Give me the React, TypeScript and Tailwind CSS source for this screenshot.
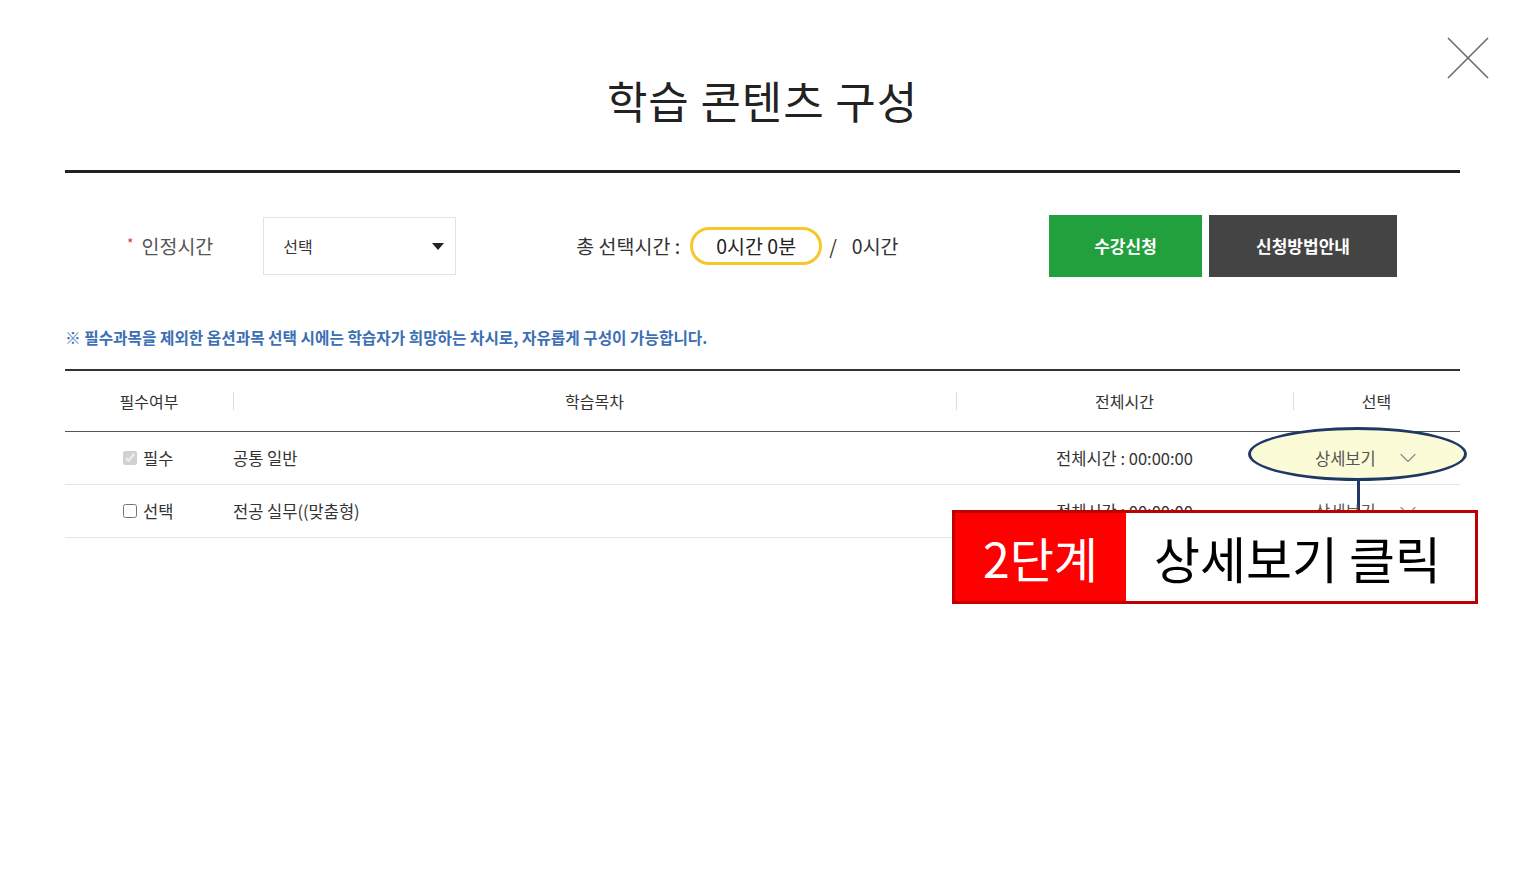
import { ChevronDown } from "lucide-react";

const FONT = { fontFamily: '"Noto Sans CJK KR", "Noto Sans", sans-serif' };

const ROWS = [
  { required: true, label: "필수", title: "공통 일반" },
  { required: false, label: "선택", title: "전공 실무((맞춤형)" },
];

function HeaderCell({ label, w, divider }: { label: string; w: string; divider?: boolean }) {
  return (
    <div className={`${w} relative flex items-center justify-center h-full`}>
      {divider && <span className="absolute left-0 top-1/2 -translate-y-1/2 w-px h-[18px] bg-[#dcdcdc]" />}
      <span>{label}</span>
    </div>
  );
}

export default function App() {
  return (
    <div className="relative w-full h-[886px] bg-white text-[#333]" style={FONT}>
      {/* close */}
      <button className="absolute left-[1446px] top-[36px] w-[44px] h-[44px]">
        <svg width="44" height="44" viewBox="0 0 44 44">
          <path d="M2 2 L42 42 M42 2 L2 42" stroke="#6b6b6b" strokeWidth="1.6" fill="none" />
        </svg>
      </button>

      <div className="ml-[65px] w-[1395px] pt-[74px]">
        <h1 className="text-center text-[44px] leading-[52px] font-normal text-[#222] tracking-[0.02em] pb-[44px] border-b-[3px] border-[#222]">
          학습 콘텐츠 구성
        </h1>

        {/* controls */}
        <div className="flex items-center h-[62px] mt-[42px]">
          <div className="ml-[62px] flex items-center text-[19.5px] text-[#555]">
            <span className="text-[#e53935] text-[14px] mr-[8px] -mt-[6px]">*</span>
            <span>인정시간</span>
          </div>
          <div className="ml-[50px] w-[193px] h-[58px] border border-[#e3e3e3] flex items-center justify-between pl-[19px] pr-[11px]">
            <span className="text-[16px] text-[#333]">선택</span>
            <svg width="12" height="7" viewBox="0 0 12 7">
              <path d="M0 0 H12 L6 7 Z" fill="#222" />
            </svg>
          </div>
          <span className="ml-[120px] text-[19.5px] text-[#333]">총 선택시간 :</span>
          <div className="ml-[10px] w-[132px] h-[38px] rounded-full border-[3px] border-[#f5c72a] flex items-center justify-center text-[19.5px] text-[#222]">
            0시간 0분
          </div>
          <span className="ml-[7px] text-[19.5px] text-[#333]">/</span>
          <span className="ml-[15px] text-[19.5px] text-[#333]">0시간</span>
          <div className="ml-auto mr-[63px] flex gap-[7px]">
            <button className="w-[153px] h-[62px] bg-[#22a03e] text-white text-[17px] font-bold">수강신청</button>
            <button className="w-[188px] h-[62px] bg-[#444444] text-white text-[17px] font-bold">신청방법안내</button>
          </div>
        </div>

        <p className="mt-[50px] text-[15.7px] font-bold text-[#3c6fb4] leading-[22px]">
          ※ 필수과목을 제외한 옵션과목 선택 시에는 학습자가 희망하는 차시로, 자유롭게 구성이 가능합니다.
        </p>

        {/* table */}
        <div className="mt-[20px] border-t-2 border-[#333]">
          <div className="flex h-[61px] text-[16px] text-[#333] border-b border-[#555]">
            <HeaderCell label="필수여부" w="w-[168px]" />
            <HeaderCell label="학습목차" w="w-[723px]" divider />
            <HeaderCell label="전체시간" w="w-[337px]" divider />
            <HeaderCell label="선택" w="w-[167px]" divider />
          </div>
          {ROWS.map((r) => (
            <div key={r.label} className="flex items-center h-[53px] border-b border-[#e6e6e6] text-[16.5px] text-[#333]">
              <div className="w-[168px] flex items-center pl-[58px] gap-[6px]">
                <input
                  type="checkbox"
                  checked={r.required}
                  disabled={r.required}
                  readOnly
                  className="w-[14px] h-[14px] m-0"
                />
                <span>{r.label}</span>
              </div>
              <div className="w-[723px]">{r.title}</div>
              <div className="w-[337px] text-center">전체시간 : 00:00:00</div>
              <div className="w-[167px] relative z-10 flex items-center pl-[22px]">
                <span className="text-[#555]">상세보기</span>
                <ChevronDown size={28} strokeWidth={1} className="ml-[18px] text-[#8a8a8a]" />
              </div>
            </div>
          ))}
        </div>
      </div>

      {/* annotation: ellipse + connector */}
      <div className="absolute left-[1248px] top-[427px] w-[219px] h-[54px] rounded-[50%] border-[3px] border-[#1f3864] bg-[#fcfbd7]" />
      <div className="absolute left-[1357px] top-[480px] w-[3px] h-[32px] bg-[#1f3864]" />

      {/* annotation: step callout */}
      <div className="absolute z-20 left-[952px] top-[510px] w-[526px] h-[94px] flex border-[3px] border-[#c00000] bg-white">
        <div className="w-[171px] h-full bg-[#ff0000] flex items-center justify-center text-white text-[48px] leading-none">
          2단계
        </div>
        <div className="flex-1 flex items-center justify-center text-black text-[50px] leading-none pr-[6px]">
          상세보기 클릭
        </div>
      </div>
    </div>
  );
}
